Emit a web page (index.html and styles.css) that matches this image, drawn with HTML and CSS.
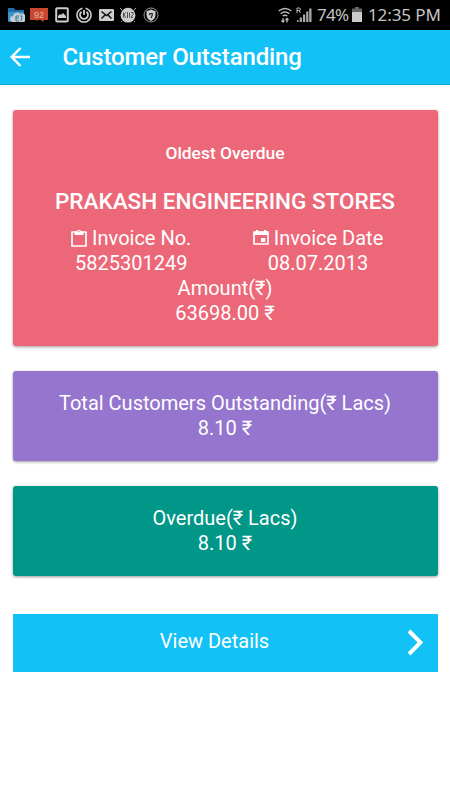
FILE: index.html
```
<!DOCTYPE html>
<html lang="en">
<head>
<meta charset="utf-8">
<title>Customer Outstanding</title>
<link rel="stylesheet" href="styles.css">
</head>
<body>
<div class="status">
  <div class="status-icons">
    <svg width="17" height="16" viewBox="0 0 17 16"><path d="M0 1h6l1 2h9v12H0z" fill="#1d6fa9"/><path d="M0 5h16l-3 9H0z" fill="#3c94cc"/><path d="M5 15a3 3 0 0 1 0-6 4 4 0 0 1 7-2 4 4 0 0 1 4 8z" fill="#c4cdd2"/><path d="M11 9H8v5h3M8 11h3M12 9h2l-1 5" fill="none" stroke="#397b9f"/></svg>
    <svg width="18" height="16" viewBox="0 0 18 16"><path d="M0 1h18v12h-4l-1 2-2-2H8l-1 1-1-1H0z" fill="#c8482f"/><text x="9" y="10.5" text-anchor="middle" class="badge-text">92</text></svg>
    <svg width="14" height="16" viewBox="0 0 14 16"><rect x="1.2" y="1.2" width="11.6" height="13.2" rx="1" fill="none" stroke="#ccc" stroke-width="2"/><path d="M3 11V9l2-2 1 1 2-2 3 3v2z" fill="#ccc"/></svg>
    <svg width="16" height="16" viewBox="0 0 16 16" fill="none" stroke="#ccc"><path d="M9.500 1.200a7 7 0 1 1-3 0" stroke-width="1.600"/><path d="M10.500 4.700a4 4 0 1 1-5 0M8 3v5" stroke-width="1.800"/></svg>
    <svg width="15" height="16" viewBox="0 0 15 16"><rect y="2" width="15" height="12" rx="1" fill="#ccc"/><path d="M2.500 4.500l5 4 5-4M2.500 11.500L6 8M12.500 11.500L9 8" fill="none" stroke="#111" stroke-width="1.500"/></svg>
    <svg width="16" height="16" viewBox="0 0 16 16"><circle cx="8" cy="8.200" r="7.400" fill="#ccc"/><path d="M2 3L0 1M14 3l2-2M2 14l-1 1M14 14l1 1" stroke="#aaa"/><path d="M3.500 5.500v5M3.500 8.500l2-3M4 8l2 3M7.500 5v6M9.500 5.500v5M11 5.500h2v2l-2 3h2" stroke="#444" stroke-width=".9" fill="none"/></svg>
    <svg width="16" height="16" viewBox="0 0 16 16"><circle cx="8" cy="8" r="7" fill="none" stroke="#999"/><path d="M8 2.500l4.500 1.700V8c0 3-2 4.800-4.500 6-2.500-1.200-4.500-3-4.500-6V4.200z" fill="#ccc"/><path d="M6.800 8.300V6.500h2.400v1.800L8 11" fill="none" stroke="#222" stroke-width="1.200"/></svg>
  </div>
  <div class="status-right">
    <svg class="wifi" width="14" height="16" viewBox="0 0 14 16" fill="none" stroke="#bbb" stroke-width="1.500"><path d="M.7 4q6.300-5 12.600 0M2.700 6.600q4.300-3.200 8.600 0M4.700 9q2.300-1.600 4.600 0"/><path d="M5 11v4M3.500 13.500L5 15l1.500-1.500M9 15.500v-4M7.500 13L9 11.500l1.500 1.500" stroke-width="1.300"/></svg>
    <svg class="signal" width="16" height="16" viewBox="0 0 16 16"><path d="M1 6V1h2q1.500 0 1.500 1.300T3 3.500H1M3 3.500L4.500 6" fill="none" stroke="#bbb"/><path d="M1 15h1.500v-2H1zM3.700 15h2.200v-4.500H3.700zM7 15h2.200V7.500H7zM10.200 15h2.200V4.500h-2.200z" fill="#aaa"/><path d="M13.200 15h2.300V1.500h-2.300z" fill="#aaa"/></svg>
    <span class="status-text percent">74%</span>
    <svg class="battery" width="10" height="16" viewBox="0 0 10 16"><path d="M3 0h4v1.500h3V5H0V1.500h3z" fill="#666"/><path d="M0 5h10v10H0z" fill="#ccc"/></svg>
    <span class="status-text clock">12:35 PM</span>
  </div>
</div>
<header class="bar">
  <svg class="back" width="20" height="20" viewBox="0 0 20 20" fill="none" stroke="#fff" stroke-width="2.500"><path d="M20 10H2M10.500 1L1.700 10l8.800 9"/></svg>
  <h1>Customer Outstanding</h1>
</header>
<main>
  <section class="card oldest">
    <h2>Oldest Overdue</h2>
    <h3>PRAKASH ENGINEERING STORES</h3>
    <div class="columns">
      <div>
        <div class="label"><svg width="16" height="18" viewBox="0 0 16 18"><path d="M1 3h14v14H1z" fill="none" stroke="#fff" stroke-width="1.700" stroke-linejoin="round"/><path d="M3.500 2.500h2.300a2.300 2.300 0 0 1 4.400 0h2.300V6h-9z" fill="#fff"/><circle cx="8" cy="2.500" r=".7" fill="#ec6879"/></svg>Invoice No.</div>
        <div>5825301249</div>
      </div>
      <div>
        <div class="label"><svg width="16" height="18" viewBox="0 0 16 18"><path d="M1 3h14v12H1z" fill="none" stroke="#fff" stroke-width="1.700" stroke-linejoin="round"/><path d="M1 2.500h14V6H1zM3 1h2v3H3zM11 1h2v3h-2zM8 9h4.300v4H8z" fill="#fff"/></svg>Invoice Date</div>
        <div>08.07.2013</div>
      </div>
    </div>
    <div>Amount(₹)</div>
    <div>63698.00 ₹</div>
  </section>
  <section class="card total">
    <div>Total Customers Outstanding(₹ Lacs)</div>
    <div>8.10 ₹</div>
  </section>
  <section class="card overdue">
    <div>Overdue(₹ Lacs)</div>
    <div>8.10 ₹</div>
  </section>
  <a class="details"><span>View Details</span><svg width="16" height="27" viewBox="0 0 16 27"><path d="M2 2l11.500 11.500L2 25" fill="none" stroke="#fff" stroke-width="4"/></svg></a>
</main>
</body>
</html>
```
FILE: styles.css
```
* { box-sizing: border-box; }
body {
  margin: 0;
  background: #fff;
  color: #fff;
  font: 20px/25px Roboto, "Noto Sans", sans-serif;
}
svg { display: block; flex: none; }
h1, h2, h3 { margin: 0; font-weight: 500; white-space: nowrap; }
.status {
  height: 30px;
  padding: 0 10px 0 8px;
  background: #000;
  display: flex;
  align-items: center;
  justify-content: space-between;
}
.status-icons { display: flex; align-items: center; gap: 6.800px; }
.status-icons svg:nth-child(2) { margin-left: -1.500px; }
.status-right { display: flex; align-items: center; }
.wifi { margin-right: 4px; }
.signal { margin-right: 5px; }
.battery { margin: 0 6px 0 3px; }
.status-text {
  font: 17px/24px "Noto Sans", sans-serif;
  color: #c4c4c4;
  white-space: nowrap;
}
.percent { width: 32px; letter-spacing: -.7px; }
.clock { width: 72px; letter-spacing: -.1px; }
.badge-text { font: 9px "Liberation Sans", sans-serif; fill: #e8b8a8; }
.bar {
  height: 55px;
  padding-left: 10px;
  background: #12c1f5;
  border-bottom: 1px solid #0fa6dc;
  display: flex;
  align-items: center;
}
.bar h1 { margin-left: 32.500px; font-size: 24px; line-height: 28px; letter-spacing: -.14px; }
main { padding: 25px 12.500px 0; }
.card {
  padding: 20px 25px;
  margin-bottom: 25px;
  border-radius: 3px;
  text-align: center;
  white-space: nowrap;
  box-shadow: 0 1px 3px rgba(0, 0, 0, .4);
}
.oldest { height: 236.400px; background: #ec6879; padding-top: 30px; }
.oldest h2 { font-size: 17.400px; line-height: 26px; }
.oldest h3 { font-size: 22.500px; line-height: 30px; margin: 20px 0 10px; }
.columns { display: grid; grid-template-columns: 1fr 1fr; }
.columns > div:last-child { margin-left: -1.500px; }
.label { display: flex; justify-content: center; align-items: center; gap: 5px; }
.label svg { margin-bottom: 2px; }
.total { height: 90px; background: #9575cd; }
.overdue { height: 90px; background: #009688; }
.details {
  height: 58px;
  margin-top: 37.600px;
  padding: 0 15px 3px 10px;
  background: #12c1f5;
  display: flex;
  align-items: center;
}
.details span { flex: 1; text-align: center; }
.details svg { margin-top: 2px; }
```
